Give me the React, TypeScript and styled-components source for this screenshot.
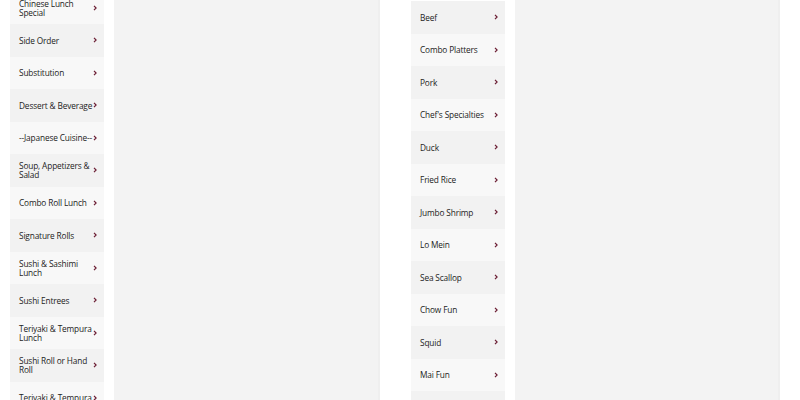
import { createGlobalStyle, styled } from "styled-components";

const GlobalStyle = createGlobalStyle`
  html, body {
    margin: 0;
    padding: 0;
    background: #ffffff;
    font-family: "Open Sans", "Liberation Sans", sans-serif;
  }
`;

const Page = styled.div`
  width: 800px;
  height: 400px;
  overflow: hidden;
  display: grid;
  grid-template-columns: 370px 369px;
  column-gap: 31px;
  padding-left: 10px;
  box-sizing: border-box;
`;

const MenuSection = styled.section`
  display: grid;
  grid-template-columns: 94px 1fr;
  column-gap: 10px;
  height: 400px;
`;

const CategoryList = styled.ul<{ $offset: number }>`
  list-style: none;
  margin: ${(p) => p.$offset}px 0 0;
  padding: 0;
  display: flex;
  flex-direction: column;
`;

const CategoryRow = styled.li<{ $shade: boolean }>`
  display: flex;
  align-items: center;
  justify-content: space-between;
  height: 32.5px;
  flex-shrink: 0;
  padding: 0 7px 0 9px;
  box-sizing: border-box;
  background-color: ${(p) => (p.$shade ? "#f2f2f2" : "#f8f8f8")};
  cursor: pointer;
`;

const CategoryName = styled.span`
  max-width: 76px;
  padding-top: 1.5px;
  font-size: 8.3px;
  line-height: 8.6px;
  color: #222222;
  letter-spacing: -0.15px;
`;

const Chevron = styled.svg`
  width: 4px;
  height: 6px;
  flex-shrink: 0;
`;

const ItemsPanel = styled.div`
  background-color: #f3f3f3;
  border-right: 2px solid #efefef;
`;

const leftCategories = [
  "Chinese Lunch Special",
  "Side Order",
  "Substitution",
  "Dessert & Beverage",
  "--Japanese Cuisine--",
  "Soup, Appetizers & Salad",
  "Combo Roll Lunch",
  "Signature Rolls",
  "Sushi & Sashimi Lunch",
  "Sushi Entrees",
  "Teriyaki & Tempura Lunch",
  "Sushi Roll or Hand Roll",
  "Teriyaki & Tempura",
];

const rightCategories = [
  "Beef",
  "Combo Platters",
  "Pork",
  "Chef's Specialties",
  "Duck",
  "Fried Rice",
  "Jumbo Shrimp",
  "Lo Mein",
  "Sea Scallop",
  "Chow Fun",
  "Squid",
  "Mai Fun",
  "Vegetables",
];

const ChevronIcon = () => (
  <Chevron viewBox="0 0 4 6">
    <path d="M1 0.8 L3.1 3 L1 5.2" fill="none" stroke="#6b1d33" strokeWidth="1.2" />
  </Chevron>
);

const Menu = ({
  categories,
  offset,
  firstShaded,
}: {
  categories: string[];
  offset: number;
  firstShaded: boolean;
}) => (
  <MenuSection>
    <CategoryList $offset={offset}>
      {categories.map((name, i) => (
        <CategoryRow key={name + i} $shade={i % 2 === 0 ? firstShaded : !firstShaded}>
          <CategoryName>{name}</CategoryName>
          <ChevronIcon />
        </CategoryRow>
      ))}
    </CategoryList>
    <ItemsPanel />
  </MenuSection>
);

export default function App() {
  return (
    <>
      <GlobalStyle />
      <Page>
        <Menu categories={leftCategories} offset={-8.5} firstShaded={false} />
        <Menu categories={rightCategories} offset={1} firstShaded={true} />
      </Page>
    </>
  );
}
